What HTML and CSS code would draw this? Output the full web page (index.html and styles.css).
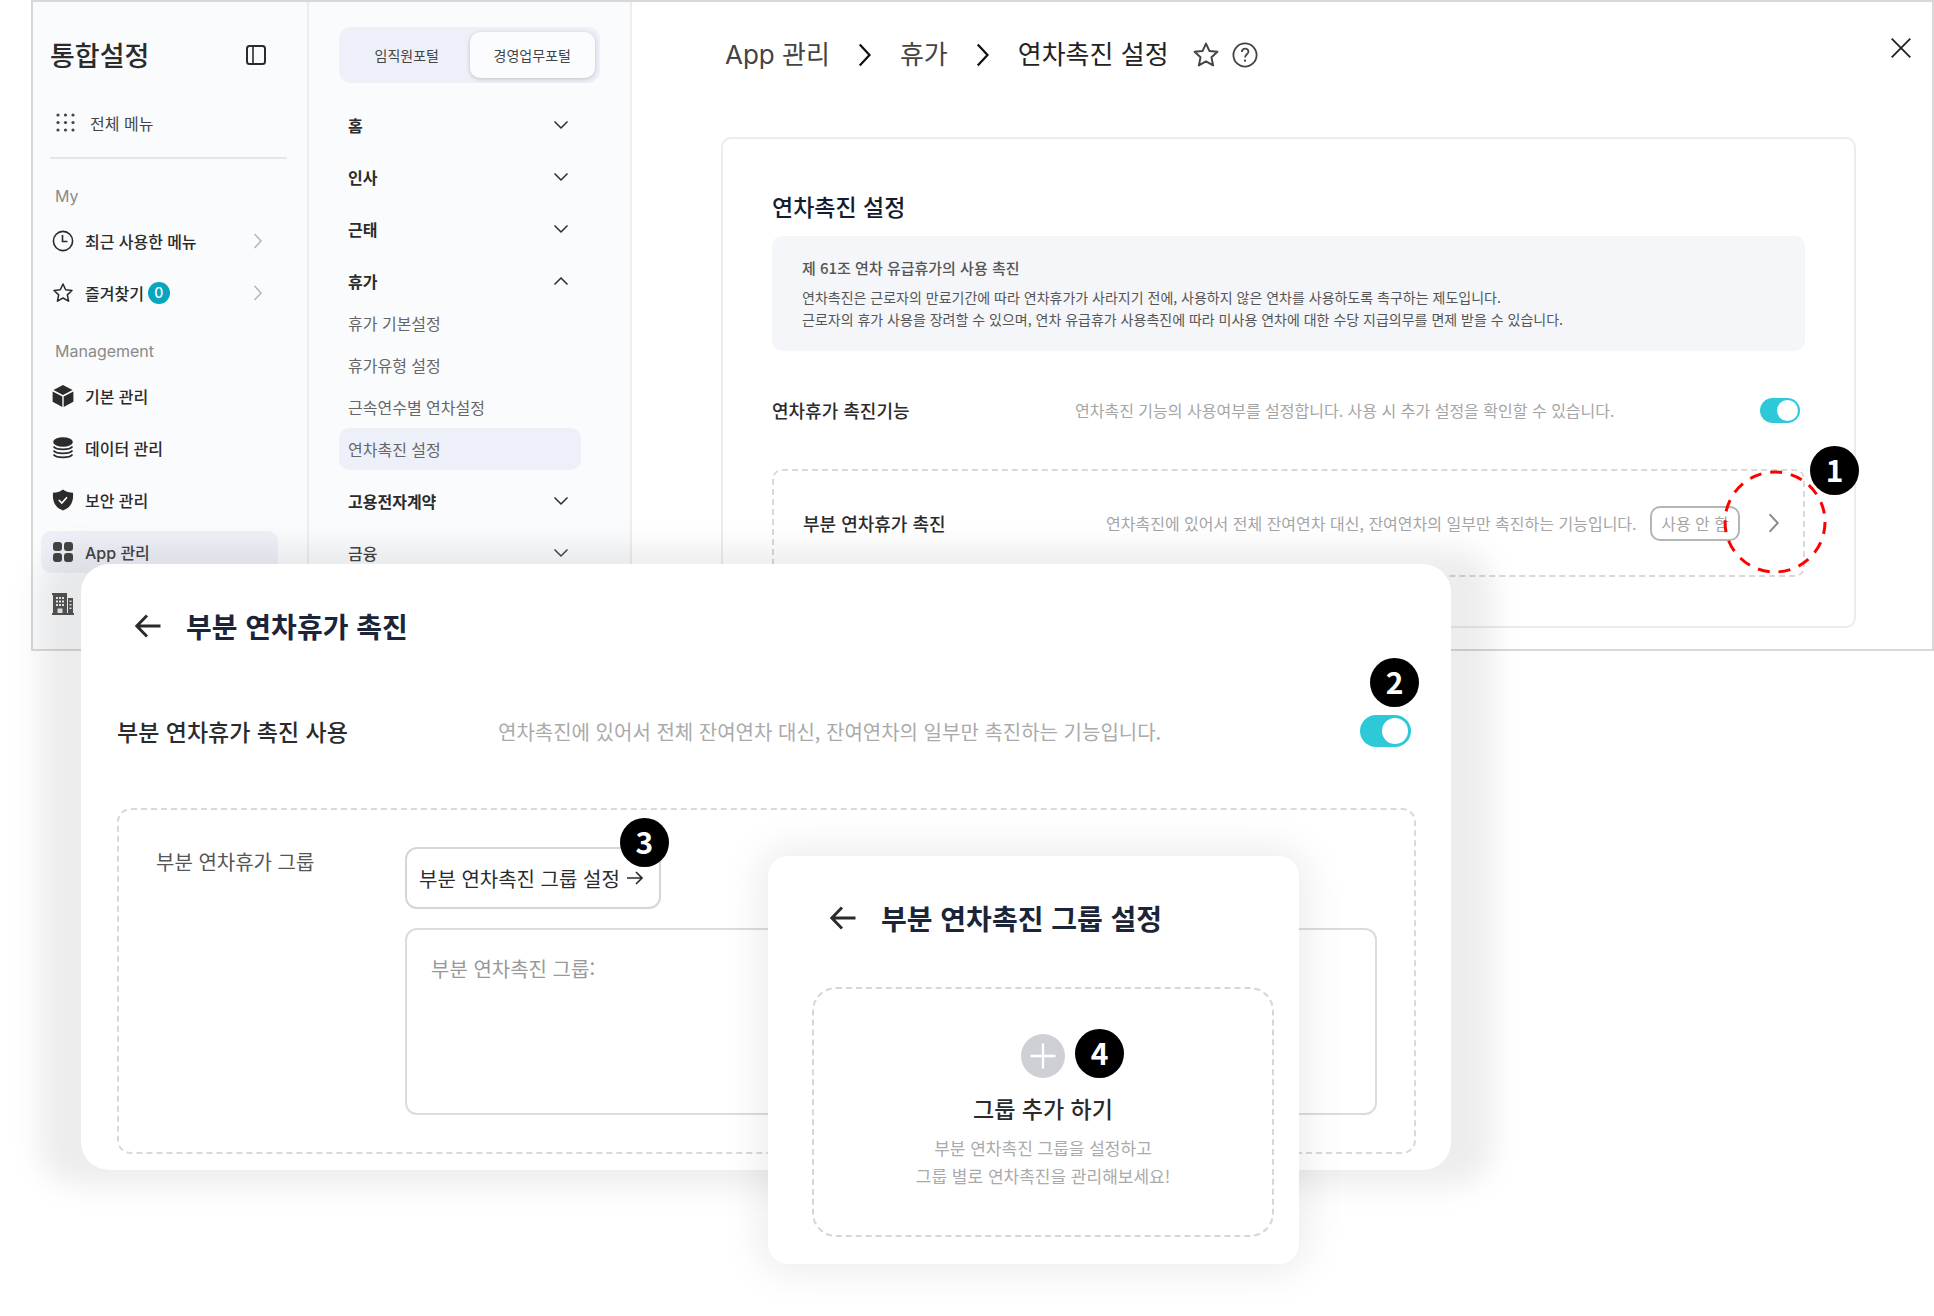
FILE: index.html
```html
<!DOCTYPE html>
<html lang="ko">
  <head>
    <meta charset="UTF-8" />
    <title>연차촉진 설정</title>
    <link rel="stylesheet" href="styles.css">
  </head>
  <body>
    <!-- shared icons -->
    <svg class="icon-defs" width="0" height="0" aria-hidden="true">
      <symbol id="chevron" viewBox="0 0 16 16"><path d="M4.500 1l6.500 7-6.500 7" fill="none" stroke="currentColor" stroke-width="1.500" /></symbol>
      <symbol id="chevron-down" viewBox="0 0 16 16"><path d="M1.500 4.500L8 11l6.500-6.500" fill="none" stroke="currentColor" stroke-width="1.500" /></symbol>
      <symbol id="star" viewBox="0 0 24 24"><path d="M12 2.200l2.900 6.300 6.900.8-5.100 4.700 1.400 6.900-6.100-3.500-6.100 3.500 1.400-6.900-5.100-4.700 6.900-.8z" fill="none" stroke="currentColor" stroke-width="1.700" stroke-linejoin="round" /></symbol>
      <symbol id="back" viewBox="0 0 26 26"><path d="M12 2.500L1.800 13 12 23.500M2 13h23.500" fill="none" stroke="currentColor" stroke-width="2.900" /></symbol>
    </svg>

    <div class="stage">
      <div class="window">
        <aside class="sidebar">
          <div class="sidebar-head">
            <h1>통합설정</h1>
            <button class="icon-button" aria-label="메뉴 접기">
              <svg width="20" height="20" viewBox="0 0 20 20" fill="none" stroke="currentColor" stroke-width="2"><rect x="1" y="1" width="18" height="18" rx="2.500" /><path d="M7 1v18" stroke-width="1.600" /></svg>
            </button>
          </div>
          <a class="all-menu" href="#">
            <svg width="20" height="20" viewBox="0 0 20 20" fill="currentColor"><circle cx="2" cy="2" r="1.600" /><circle cx="9.500" cy="2" r="1.600" /><circle cx="17" cy="2" r="1.600" /><circle cx="2" cy="9.500" r="1.600" /><circle cx="9.500" cy="9.500" r="1.600" /><circle cx="17" cy="9.500" r="1.600" /><circle cx="2" cy="17" r="1.600" /><circle cx="9.500" cy="17" r="1.600" /><circle cx="17" cy="17" r="1.600" /></svg>
            전체 메뉴
          </a>
          <h2 class="nav-title">My</h2>
          <nav class="nav">
            <a class="nav-item" href="#">
              <svg width="22" height="22" viewBox="0 0 22 22" fill="none" stroke="currentColor" stroke-width="1.600"><circle cx="11" cy="11" r="9.600" /><path d="M10.500 5v6.500h5" /></svg>
              <span>최근 사용한 메뉴</span>
              <svg class="nav-arrow" width="16" height="16"><use href="#chevron" /></svg>
            </a>
            <a class="nav-item" href="#">
              <svg width="24" height="24"><use href="#star" /></svg>
              <span>즐겨찾기</span>
              <span class="count">0</span>
              <svg class="nav-arrow" width="16" height="16"><use href="#chevron" /></svg>
            </a>
          </nav>
          <h2 class="nav-title">Management</h2>
          <nav class="nav">
            <a class="nav-item" href="#">
              <svg width="22" height="22" viewBox="0 0 22 22" fill="currentColor"><path d="M11 0l9.500 4.900L11 9.900 1.500 4.900z" /><path d="M.6 6.400l9.700 5.100V22L.6 16.800z" /><path d="M21.400 6.400l-9.700 5.100V22l9.700-5.200z" /></svg>
              <span>기본 관리</span>
            </a>
            <a class="nav-item" href="#">
              <svg width="22" height="24" viewBox="0 0 22 24" fill="none" stroke="currentColor" stroke-width="1.700"><ellipse cx="11" cy="6" rx="9" ry="4" fill="currentColor" /><path d="M1.500 10.500c3 3.800 16 3.800 19 0M1.500 14.500c3 3.800 16 3.800 19 0M1.500 18.500c3 3.800 16 3.800 19 0" /></svg>
              <span>데이터 관리</span>
            </a>
            <a class="nav-item" href="#">
              <svg width="22" height="22" viewBox="0 0 22 22"><path d="M11 .5c3 2.500 6.500 3 10 3.200.6 8-1.500 14.500-10 17.800C2.500 18.200.4 11.700 1 3.700 4.500 3.500 8 3 11 .5z" fill="currentColor" /><path d="M6.800 11l3 3 5.200-5.800" fill="none" stroke="#fff" stroke-width="1.600" /></svg>
              <span>보안 관리</span>
            </a>
            <a class="nav-item active" href="#">
              <svg width="22" height="22" viewBox="0 0 22 22" fill="currentColor"><rect x="1" y="1" width="9" height="9" rx="3" /><rect x="12" y="1" width="9" height="9" rx="3" /><rect x="1" y="12" width="9" height="9" rx="3" /><rect x="12" y="12" width="9" height="9" rx="3" /></svg>
              <span>App 관리</span>
            </a>
            <a class="nav-item muted" href="#" aria-label="회사 관리">
              <svg width="22" height="22" viewBox="0 0 22 22"><path d="M0 0h15v20h1V5h5v15h1v2H0v-2h1V2H0z" fill="currentColor" /><path d="M4 4h2v2H4zM7 4h2v2H7zM10 4h2v2h-2zM4 7.500h2v2H4zM7 7.500h2v2H7zM10 7.500h2v2h-2zM4 11h2v2H4zM7 11h2v2H7zM10 11h2v2h-2zM5.500 15.500h5V20h-5zM17.500 7.500h2v1.500h-2zM17.500 11h2v1.500h-2zM17.500 14.500h2V16h-2z" fill="#eee" /></svg>
            </a>
          </nav>
        </aside>

        <aside class="menu">
          <div class="tabs">
            <button class="tab">임직원포털</button>
            <button class="tab selected">경영업무포털</button>
          </div>
          <nav class="groups">
            <button class="group">홈 <svg width="16" height="16"><use href="#chevron-down" /></svg></button>
            <button class="group">인사 <svg width="16" height="16"><use href="#chevron-down" /></svg></button>
            <button class="group">근태 <svg width="16" height="16"><use href="#chevron-down" /></svg></button>
            <div>
              <button class="group open">휴가 <svg width="16" height="16"><use href="#chevron-down" /></svg></button>
              <a class="sub" href="#">휴가 기본설정</a>
              <a class="sub" href="#">휴가유형 설정</a>
              <a class="sub" href="#">근속연수별 연차설정</a>
              <a class="sub active" href="#">연차촉진 설정</a>
            </div>
            <button class="group">고용전자계약 <svg width="16" height="16"><use href="#chevron-down" /></svg></button>
            <button class="group faded">금융 <svg width="16" height="16"><use href="#chevron-down" /></svg></button>
          </nav>
        </aside>

        <main class="main">
          <header class="topbar">
            <a href="#">App 관리</a>
            <svg class="crumb-arrow" width="24" height="24"><use href="#chevron" /></svg>
            <a href="#">휴가</a>
            <svg class="crumb-arrow" width="24" height="24"><use href="#chevron" /></svg>
            <span class="current">연차촉진 설정</span>
            <div class="topbar-icons">
              <button class="icon-button" aria-label="즐겨찾기 추가"><svg width="28" height="28"><use href="#star" /></svg></button>
              <button class="icon-button" aria-label="도움말">
                <svg width="26" height="26" viewBox="0 0 26 26" fill="none" stroke="currentColor" stroke-width="1.800"><circle cx="13" cy="13" r="11.600" /><path d="M9.800 10c0-4.500 6.800-4.200 6.600-.3-.1 2.600-3.300 2.600-3.300 5.800M13 17.500v2.200" /></svg>
              </button>
            </div>
            <button class="icon-button close" aria-label="닫기">
              <svg width="20" height="20" viewBox="0 0 20 20" fill="none" stroke="currentColor" stroke-width="1.800"><path d="M.7.700l18.600 18.600M19.300.7L.7 19.300" /></svg>
            </button>
          </header>

          <section class="card">
            <h2>연차촉진 설정</h2>
            <div class="notice">
              <h3>제 61조 연차 유급휴가의 사용 촉진</h3>
              <p>연차촉진은 근로자의 만료기간에 따라 연차휴가가 사라지기 전에, 사용하지 않은 연차를 사용하도록 촉구하는 제도입니다.<br>근로자의 휴가 사용을 장려할 수 있으며, 연차 유급휴가 사용촉진에 따라 미사용 연차에 대한 수당 지급의무를 면제 받을 수 있습니다.</p>
            </div>
            <div class="row">
              <label for="promote">연차휴가 촉진기능</label>
              <p>연차촉진 기능의 사용여부를 설정합니다. 사용 시 추가 설정을 확인할 수 있습니다.</p>
              <input class="toggle" type="checkbox" id="promote" checked>
            </div>
            <div class="row boxed">
              <h3>부분 연차휴가 촉진</h3>
              <p>연차촉진에 있어서 전체 잔여연차 대신, 잔여연차의 일부만 촉진하는 기능입니다.</p>
              <span class="status">사용 안 함</span>
              <button class="icon-button more" aria-label="부분 연차휴가 촉진 열기"><svg width="20" height="20"><use href="#chevron" /></svg></button>
              <svg class="ring" width="104" height="104" viewBox="0 0 104 104"><circle cx="52" cy="52" r="50" fill="none" stroke="#f00" stroke-width="3" stroke-dasharray="12 8.944" /></svg>
              <span class="step step-1">1</span>
            </div>
          </section>
        </main>
      </div>

      <section class="sheet">
        <header class="sheet-head">
          <button class="icon-button" aria-label="뒤로"><svg width="26" height="26"><use href="#back" /></svg></button>
          <h2>부분 연차휴가 촉진</h2>
        </header>
        <div class="sheet-row">
          <label for="partial">부분 연차휴가 촉진 사용</label>
          <p>연차촉진에 있어서 전체 잔여연차 대신, 잔여연차의 일부만 촉진하는 기능입니다.</p>
          <div class="toggle-wrap">
            <input class="toggle large" type="checkbox" id="partial" checked>
            <span class="step step-2">2</span>
          </div>
        </div>
        <div class="group-box">
          <label for="groupList">부분 연차휴가 그룹</label>
          <div class="group-fields">
            <button class="group-button">
              부분 연차촉진 그룹 설정
              <svg width="18" height="18" viewBox="0 0 18 18" fill="none" stroke="currentColor" stroke-width="1.700"><path d="M1 9h15M10 3l6 6-6 6" /></svg>
              <span class="step step-3">3</span>
            </button>
            <textarea id="groupList" placeholder="부분 연차촉진 그룹:"></textarea>
          </div>
        </div>
      </section>

      <section class="dialog">
        <header class="sheet-head">
          <button class="icon-button" aria-label="뒤로"><svg width="26" height="26"><use href="#back" /></svg></button>
          <h2>부분 연차촉진 그룹 설정</h2>
        </header>
        <button class="add-group">
          <span class="plus">
            <svg width="44" height="44" viewBox="0 0 44 44"><circle cx="22" cy="22" r="22" fill="#cfd0d5" /><path d="M22 9.500v25M9.500 22h25" stroke="#fff" stroke-width="2.400" /></svg>
            <span class="step step-4">4</span>
          </span>
          <strong>그룹 추가 하기</strong>
          <span class="add-text">부분 연차촉진 그룹을 설정하고<br>그룹 별로 연차촉진을 관리해보세요!</span>
        </button>
      </section>
    </div>
  </body>
</html>
```

FILE: styles.css
```css
* {
  box-sizing: border-box;
}

body {
  margin: 0;
  background: #fff;
  color: #2b2b2b;
  font-family: "Noto Sans CJK KR", sans-serif;
  font-size: 16px;
}

h1,
h2,
h3,
p {
  margin: 0;
}

a {
  color: inherit;
  text-decoration: none;
}

button,
textarea {
  font-family: inherit;
  color: inherit;
}

button {
  padding: 0;
  border: none;
  background: none;
  cursor: pointer;
}

svg {
  display: block;
  flex: none;
}

.icon-defs {
  position: absolute;
}

.icon-button {
  display: flex;
}

.stage {
  position: relative;
  min-height: 100vh;
}

.window {
  display: flex;
  margin-left: 31px;
  border: 2px solid #d8d8d8;
}

/* left navigation */
.sidebar {
  width: 276px;
  flex: none;
  background: #fafbfd;
  border-right: 2px solid #ececf1;
  padding-bottom: 24px;
}

.sidebar-head {
  display: flex;
  align-items: center;
  justify-content: space-between;
  height: 106px;
  padding: 0 41px 0 17px;
}

.sidebar-head h1 {
  font-size: 27px;
  font-weight: 500;
  line-height: 40px;
}

.all-menu {
  display: flex;
  align-items: center;
  gap: 14px;
  height: 51px;
  margin: 0 20px 0 17px;
  padding: 0 5px 20px 6px;
  border-bottom: 2px solid #e6e7ea;
  color: #444;
}

.nav-title {
  padding: 0 22px;
  margin-top: 25px;
  font-family: Inter, sans-serif;
  font-size: 16px;
  font-weight: 400;
  line-height: 24px;
  color: #8a8a8a;
}

.nav {
  display: flex;
  flex-direction: column;
  gap: 10px;
  margin: 12px 29px 0 8px;
}

.nav-item {
  display: flex;
  align-items: center;
  height: 42px;
  padding: 0 12px 0 44px;
  border-radius: 10px;
  font-family: Inter, "Noto Sans CJK KR", sans-serif;
  font-weight: 500;
}

.nav-item svg:first-child {
  width: 22px;
  margin-left: -33px;
  margin-right: 11px;
}

.nav-item.active {
  background: #eef0f8;
  color: #444;
}

.nav-item.muted {
  color: #555;
}

.nav-arrow {
  margin-left: auto;
  color: #b5b5b5;
}

.count {
  width: 22px;
  margin-left: 4px;
  border-radius: 11px;
  background: #06a6bf;
  color: #fff;
  font-size: 14px;
  line-height: 22px;
  text-align: center;
}

/* second column */
.menu {
  width: 323px;
  flex: none;
  background: #fafbfd;
  border-right: 2px solid #ececf1;
  padding: 25px 30px 0;
}

.tabs {
  display: flex;
  height: 56px;
  padding: 5px;
  border-radius: 12px;
  background: #eef0f9;
}

.tab {
  flex: 1;
  border-radius: 10px;
  font-size: 14px;
  color: #444;
}

.tab.selected {
  background: #fbfcfe;
  box-shadow: 0 1px 4px rgba(0, 0, 0, 0.2);
}

.groups {
  display: flex;
  flex-direction: column;
  gap: 10px;
  margin: 21px 19px 0 0;
}

.group {
  display: flex;
  align-items: center;
  justify-content: space-between;
  width: 100%;
  height: 42px;
  padding: 0 12px 0 9px;
  font-size: 16px;
  font-weight: 700;
}

.group.open svg {
  transform: rotate(180deg);
}

.group.faded {
  font-weight: 500;
  color: #444;
}

.sub {
  display: block;
  padding: 0 9px;
  border-radius: 10px;
  line-height: 42px;
  color: #666;
}

.sub.active {
  background: #eef0f9;
}

/* main area */
.main {
  flex: 1;
  padding: 0 76px 21px 89px;
}

.topbar {
  display: flex;
  align-items: center;
  gap: 23px;
  height: 106px;
  margin-right: -55px;
  padding-left: 4px;
  font-family: Inter, "Noto Sans CJK KR", sans-serif;
  font-size: 26px;
  line-height: 40px;
  color: #444;
}

.crumb-arrow {
  color: #111;
}

.current {
  color: #222;
}

.topbar-icons {
  display: flex;
  align-items: center;
  gap: 12px;
}

.close {
  align-self: flex-start;
  margin-top: 36px;
  margin-left: auto;
  color: #222;
}

.card {
  margin-top: 29px;
  padding: 52px 49px 49px;
  border: 2px solid #ececec;
  border-radius: 10px;
}

.card h2 {
  font-size: 23px;
  font-weight: 500;
  line-height: 30px;
  color: #141c30;
}

.notice {
  margin-top: 15px;
  padding: 20px 30px 21px;
  border-radius: 10px;
  background: #f4f6f9;
  color: #555;
}

.notice h3 {
  margin-bottom: 6px;
  font-size: 15px;
  font-weight: 500;
  line-height: 24px;
}

.notice p {
  font-size: 14px;
  line-height: 22px;
}

.row {
  display: flex;
  align-items: center;
  height: 40px;
  margin-top: 39px;
  padding-right: 5px;
}

.row label,
.row h3 {
  width: 303px;
  font-size: 18px;
  font-weight: 500;
}

.row p {
  color: #a5a5a5;
}

.toggle {
  appearance: none;
  width: 40px;
  height: 25px;
  margin: 0 0 0 auto;
  padding: 2px;
  border-radius: 16px;
  background: #2ec9d8;
}

.toggle::before {
  content: "";
  display: block;
  width: 21px;
  height: 21px;
  margin-left: auto;
  border-radius: 50%;
  background: #fff;
}

.toggle.large {
  display: block;
  width: 51px;
  height: 32px;
  padding: 3px;
}

.toggle.large::before {
  width: 26px;
  height: 26px;
}

.row.boxed {
  position: relative;
  height: 108px;
  padding: 0 19px 0 29px;
  border: 2px dashed #d9d9d9;
  border-radius: 10px;
}

.status {
  margin-left: auto;
  padding: 0 9px;
  border: 2px solid #b5b5b5;
  border-radius: 10px;
  line-height: 31px;
  color: #a5a5a5;
}

.more {
  margin-left: 24px;
  color: #8a8a8a;
}

.ring {
  position: absolute;
  top: -1px;
  right: -24px;
}

/* numbered markers */
.step {
  position: absolute;
  width: 49px;
  height: 49px;
  border-radius: 50%;
  background: #000;
  color: #fff;
  font-size: 30px;
  font-weight: 700;
  line-height: 46px;
  text-align: center;
}

.step-1 {
  top: -25px;
  right: -56px;
}

.step-2 {
  top: -57px;
  right: -8px;
}

.step-3 {
  top: -31px;
  right: -10px;
}

.step-4 {
  top: -5px;
  left: 54px;
}

/* partial leave sheet */
.sheet {
  position: absolute;
  top: 564px;
  left: 81px;
  right: 483px;
  z-index: 1;
  padding: 42px 35px 16px 36px;
  border-radius: 28px;
}

.sheet::before {
  content: "";
  position: absolute;
  inset: -16px -42px;
  z-index: -2;
  background: rgba(0, 0, 0, 0.07);
  border-radius: 40px;
  filter: blur(14px);
}

.sheet::after {
  content: "";
  position: absolute;
  inset: 0;
  z-index: -1;
  background: #fff;
  border-radius: 28px;
}

.sheet-head {
  display: flex;
  align-items: center;
  gap: 25px;
  height: 40px;
  padding-left: 18px;
}

.sheet-head h2 {
  font-size: 28px;
  font-weight: 700;
  line-height: 38px;
  color: #1c2437;
}

.sheet-row {
  display: flex;
  align-items: center;
  height: 40px;
  margin-top: 65px;
  padding-right: 5px;
}

.sheet-row label {
  width: 381px;
  font-size: 23px;
  font-weight: 500;
}

.sheet-row p {
  font-size: 20px;
  color: #aaa;
}

.toggle-wrap {
  position: relative;
  margin-left: auto;
}

.group-box {
  display: flex;
  margin-top: 57px;
  padding: 37px;
  border: 2px dashed #d9d9d9;
  border-radius: 14px;
  font-size: 20px;
  line-height: 30px;
}

.group-box label {
  width: 249px;
  color: #555;
}

.group-fields {
  display: flex;
  flex: 1;
  flex-direction: column;
  align-items: flex-start;
  gap: 19px;
}

.group-button {
  position: relative;
  display: flex;
  align-items: center;
  gap: 6px;
  height: 62px;
  padding: 0 15px 0 12px;
  border: 2px solid #d5d6da;
  border-radius: 12px;
  font-size: 20px;
}

.group-fields textarea {
  width: 100%;
  height: 187px;
  padding: 24px;
  border: 2px solid #dcdcdc;
  border-radius: 12px;
  font-size: 20px;
  line-height: 30px;
  resize: none;
}

.group-fields textarea::placeholder {
  color: #999;
}

/* group setting dialog */
.dialog {
  position: absolute;
  top: 856px;
  left: 768px;
  z-index: 2;
  width: 531px;
  padding: 42px 25px 27px 44px;
  border-radius: 20px;
  background: #fff;
  box-shadow: 0 0 40px 8px rgba(0, 0, 0, 0.08);
}

.add-group {
  display: flex;
  flex-direction: column;
  align-items: center;
  width: 100%;
  margin-top: 49px;
  padding: 45px 0;
  border: 2px dashed #d5d6da;
  border-radius: 24px;
}

.plus {
  position: relative;
}

.add-group strong {
  margin-top: 14px;
  font-size: 23px;
  font-weight: 500;
  line-height: 32px;
}

.add-text {
  margin-top: 10px;
  font-size: 17px;
  line-height: 28px;
  color: #aaa;
}
```
